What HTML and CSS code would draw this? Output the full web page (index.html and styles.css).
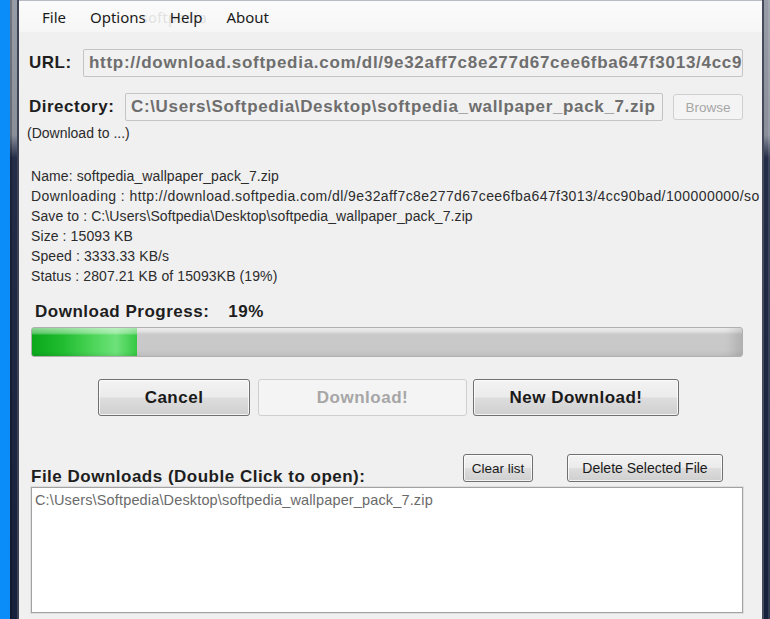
FILE: index.html
```html
<!DOCTYPE html>
<html>
<head>
<meta charset="utf-8">
<link rel="stylesheet" href="styles.css">
</head>
<body>
<div class="screen">
  <div class="desk"></div>
  <div class="frame">
    <div class="client">
      <div class="menubar">
        <span class="watermark">softpedia</span>
        <span class="menu-item">File</span>
        <span class="menu-item">Options</span>
        <span class="menu-item">Help</span>
        <span class="menu-item">About</span>
      </div>

      <div class="row url-row">
        <span class="label">URL:</span>
        <div class="textbox url-box">http://download.softpedia.com/dl/9e32aff7c8e277d67cee6fba647f3013/4cc9</div>
      </div>

      <div class="row dir-row">
        <span class="label">Directory:</span>
        <div class="textbox dir-box">C:\Users\Softpedia\Desktop\softpedia_wallpaper_pack_7.zip</div>
        <div class="btn small disabled browse">Browse</div>
      </div>

      <div class="hint">(Download to ...)</div>

      <div class="info">
        <div>Name: softpedia_wallpaper_pack_7.zip</div>
        <div class="clip">Downloading : http://download.softpedia.com/dl/9e32aff7c8e277d67cee6fba647f3013/4cc90bad/100000000/so</div>
        <div>Save to : C:\Users\Softpedia\Desktop\softpedia_wallpaper_pack_7.zip</div>
        <div>Size : 15093 KB</div>
        <div>Speed : 3333.33 KB/s</div>
        <div>Status : 2807.21 KB of 15093KB (19%)</div>
      </div>

      <div class="progress-label"><span>Download Progress:</span><span class="pct">19%</span></div>
      <div class="progress"><div class="fill" style="width:105px"></div></div>

      <div class="actions">
        <div class="btn big cancel">Cancel</div>
        <div class="btn big disabled dl">Download!</div>
        <div class="btn big newdl">New Download!</div>
      </div>

      <div class="list-head">
        <span class="list-title">File Downloads (Double Click to open):</span>
        <div class="list-btns">
          <div class="btn small clear">Clear list</div>
          <div class="btn small del">Delete Selected File</div>
        </div>
      </div>
      <div class="listbox">
        <div class="list-item">C:\Users\Softpedia\Desktop\softpedia_wallpaper_pack_7.zip</div>
      </div>
    </div>
  </div>
</div>
</body>
</html>
```

FILE: styles.css
```css
html, body {
  margin: 0;
  padding: 0;
  width: 770px;
  height: 619px;
  overflow: hidden;
}
.screen {
  display: flex;
  width: 770px;
  height: 619px;
  overflow: hidden;
  background: #0a8df8;
}
.desk {
  width: 10px;
  flex: none;
  background: #0a8df8;
}
.frame {
  flex: 1;
  min-width: 0;
  display: flex;
  padding: 0 6px 0 7px;
  background: linear-gradient(to bottom, #989ca6 0, #8a8f9a 135px, #242d48 158px, #18213b 100%);
  box-shadow: inset 2px 0 0 rgba(0,0,0,0.25), inset -2px 0 0 rgba(255,255,255,0.12);
}
.client {
  flex: 1;
  min-width: 0;
  height: 619px;
  overflow: hidden;
  white-space: nowrap;
  background: #f0f0f0;
  border-left: 2px solid #3c4354;
  border-right: 2px solid #454b5c;
  font-family: "Liberation Sans", Arial, sans-serif;
  color: #222;
}
.menubar {
  position: relative;
  height: 32px;
  box-sizing: border-box;
  border-top: 1px solid #b8bcc4;
  background: linear-gradient(to bottom, #fbfbfb, #f6f6f6);
  display: flex;
  align-items: center;
  gap: 24px;
  padding-left: 23px;
  font-family: "Noto Sans", "Open Sans", sans-serif;
  font-size: 15px;
  color: #1b1b1b;
}
.menu-item {
  position: relative;
}
.watermark {
  position: absolute;
  left: 122px;
  top: 7px;
  font-size: 14px;
  color: #e2e2e2;
  letter-spacing: 0.5px;
}
.row {
  display: flex;
  align-items: center;
  padding-left: 10px;
}
.label {
  font-weight: bold;
  font-size: 17px;
  letter-spacing: 0.5px;
  color: #1e1e1e;
}
.url-row {
  margin-top: 17px;
  height: 28px;
}
.url-row .label { width: 54px; }
.dir-row {
  margin-top: 16px;
  height: 28px;
}
.dir-row .label { width: 96px; }
.textbox {
  box-sizing: border-box;
  height: 28px;
  line-height: 26px;
  border: 1px solid #c4c4c4;
  border-radius: 2px;
  background: #f1f1f1;
  padding-left: 5px;
  overflow: hidden;
  font-weight: bold;
  font-size: 17px;
  letter-spacing: 0.65px;
  color: #6e6e6e;
}
.url-box { width: 660px; letter-spacing: 0.72px; }
.dir-box { width: 538px; }
.btn {
  box-sizing: border-box;
  display: flex;
  align-items: center;
  justify-content: center;
  border: 1px solid #707070;
  border-radius: 3px;
  background: linear-gradient(to bottom, #f3f3f3 0, #ebebeb 48%, #dddddd 52%, #cfcfcf 100%);
  box-shadow: inset 0 0 0 1px rgba(255,255,255,0.75);
  color: #1a1a1a;
}
.btn.disabled {
  border-color: #cfcfcf;
  background: #f4f4f4;
  box-shadow: none;
  color: #a6a6a6;
}
.small {
  height: 28px;
  font-size: 13.5px;
}
.big {
  height: 37px;
  font-size: 17px;
  font-weight: bold;
  letter-spacing: 0.5px;
}
.browse {
  width: 70px;
  height: 26px;
  margin-left: 10px;
}
.hint {
  margin-top: 3px;
  padding-left: 8px;
  height: 18px;
  line-height: 18px;
  font-size: 14px;
  color: #2a2a2a;
}
.info {
  margin-top: 24px;
  padding-left: 12px;
  font-size: 14px;
  line-height: 20px;
  letter-spacing: 0.1px;
  color: #2c2c2c;
}
.clip {
  overflow: hidden;
  letter-spacing: 0.42px;
}
.progress-label {
  margin-top: 16px;
  padding-left: 16px;
  height: 20px;
  line-height: 20px;
  font-weight: bold;
  font-size: 17px;
  letter-spacing: 0.5px;
  color: #1e1e1e;
}
.pct { margin-left: 19px; }
.progress {
  margin: 5px 0 0 12px;
  width: 712px;
  height: 30px;
  box-sizing: border-box;
  border: 1px solid #b0b0b0;
  border-radius: 3px;
  overflow: hidden;
  background: linear-gradient(to bottom, #ececec 0, #e2e2e2 12%, #cacaca 22%, #c8c8c8 80%, #bdbdbd 100%);
  box-shadow: inset -20px 0 12px -12px rgba(0,0,0,0.12);
}
.fill {
  height: 100%;
  background:
    linear-gradient(to bottom, rgba(255,255,255,0.55) 0, rgba(255,255,255,0.35) 18%, rgba(255,255,255,0) 26%, rgba(0,0,0,0) 85%, rgba(0,0,0,0.08) 100%),
    linear-gradient(to right, #0aa81c 0, #22bd31 30%, #4fd65b 60%, #6ee27a 80%, #35c842 100%);
}
.actions {
  display: flex;
  margin-top: 22px;
  padding-left: 79px;
}
.cancel { width: 152px; }
.dl { width: 209px; margin-left: 8px; }
.newdl { width: 206px; margin-left: 6px; }
.list-head {
  display: flex;
  margin-top: 38px;
  height: 33px;
  padding-left: 12px;
}
.list-title {
  align-self: flex-end;
  line-height: 20px;
  font-weight: bold;
  font-size: 17px;
  letter-spacing: 0.5px;
  color: #1e1e1e;
  width: 432px;
}
.list-btns {
  display: flex;
  align-items: flex-start;
}
.clear { width: 70px; }
.del { width: 156px; margin-left: 34px; font-size: 14px; }
.listbox {
  margin-left: 12px;
  width: 712px;
  height: 126px;
  box-sizing: border-box;
  border: 1px solid #a2a2a2;
  box-shadow: 0 0 0 1px #dedede;
  background: #fff;
  padding: 3px 0 0 3px;
}
.list-item {
  font-size: 14.5px;
  line-height: 18px;
  letter-spacing: 0.15px;
  color: #6a6a6a;
}
```
